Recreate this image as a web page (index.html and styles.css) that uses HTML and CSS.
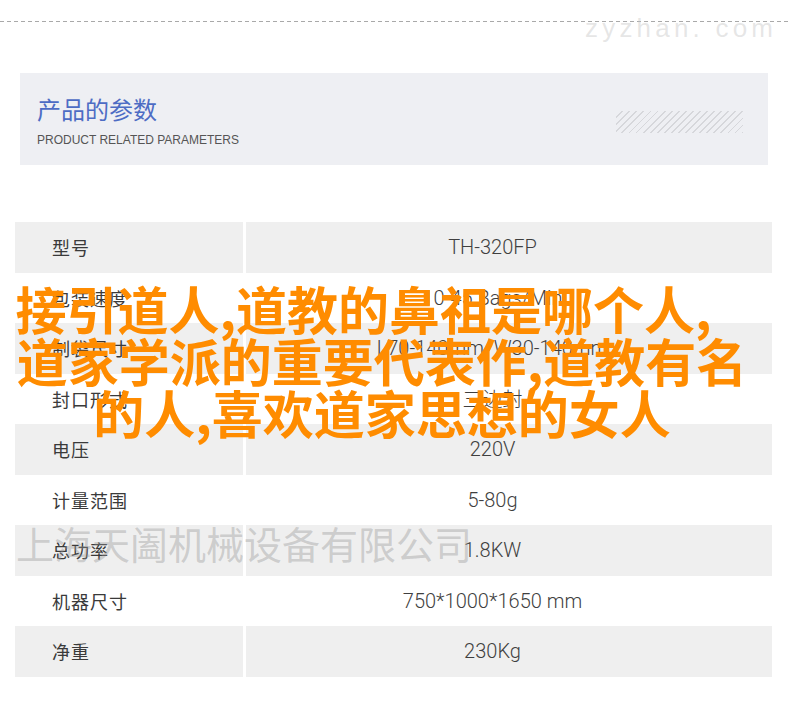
FILE: index.html
```html
<!DOCTYPE html>
<html lang="zh-CN">
<head>
<meta charset="utf-8">
<title>产品的参数</title>
<link rel="stylesheet" href="styles.css">
</head>
<body>
<div class="page">
  <div class="topline"></div>
  <div class="site">zyzhan. com</div>

  <section class="head">
    <div class="head-text">
      <h1 class="head-title">产品的参数</h1>
      <p class="head-sub">PRODUCT RELATED PARAMETERS</p>
    </div>
    <div class="hatch"></div>
  </section>

  <div class="spec">
    <div class="cell label alt">型号</div><div class="cell value alt">TH-320FP</div>
    <div class="cell label">包装速度</div><div class="cell value">10-45 Bags/Min</div>
    <div class="cell label alt">制袋尺寸</div><div class="cell value alt">L70-140mm  W30-140mm</div>
    <div class="cell label">封口形式</div><div class="cell value">三边封</div>
    <div class="cell label alt">电压</div><div class="cell value alt">220V</div>
    <div class="cell label">计量范围</div><div class="cell value">5-80g</div>
    <div class="cell label alt">总功率</div><div class="cell value alt">1.8KW</div>
    <div class="cell label">机器尺寸</div><div class="cell value">750*1000*1650 mm</div>
    <div class="cell label alt">净重</div><div class="cell value alt">230Kg</div>
  </div>

  <div class="company">上海天阖机械设备有限公司</div>

  <div class="headline">
    <span class="hl-line hl-first">接引道人,道教的鼻祖是哪个人,</span>
    <span class="hl-line">道家学派的重要代表作,道教有名</span>
    <span class="hl-line">的人,喜欢道家思想的女人</span>
  </div>
</div>
</body>
</html>
```

FILE: styles.css
```css
html, body {
  margin: 0;
  padding: 0;
  background: #ffffff;
}

.page {
  position: relative;
  width: 790px;
  height: 715px;
  overflow: hidden;
  font-family: "Noto Sans CJK SC", "Noto Sans", sans-serif;
}

.topline {
  margin-top: 21px;
  height: 1px;
  background: repeating-linear-gradient(to right, #a9a9a9 0 4px, transparent 4px 7px);
}

.site {
  position: absolute;
  left: 585px;
  top: 13px;
  font-family: "Liberation Sans", Arial, sans-serif;
  font-size: 26px;
  letter-spacing: 4.2px;
  color: rgba(200, 200, 200, 0.45);
  line-height: 30px;
  white-space: nowrap;
}

.head {
  margin: 51px 22px 0 20px;
  height: 92px;
  background: #eeeff3;
  display: flex;
  align-items: flex-start;
  justify-content: space-between;
}

.head-text {
  padding: 22px 0 0 17px;
}

.head-title {
  margin: 0;
  font-size: 24px;
  line-height: 28px;
  font-weight: 400;
  color: #4d6cc4;
}

.head-sub {
  margin: 10px 0 0 0;
  font-family: "Liberation Sans", Arial, sans-serif;
  font-size: 12px;
  line-height: 14px;
  color: #555555;
}

.hatch {
  width: 127px;
  height: 22px;
  margin: 38px 25px 0 0;
  background: repeating-linear-gradient(-45deg, #d6d7db 0 1.3px, transparent 1.3px 5px);
}

.spec {
  margin: 57px 0 0 15px;
  width: 757px;
  display: grid;
  grid-template-columns: 228px 526px;
  column-gap: 3px;
  grid-auto-rows: 50.5px;
}

.cell {
  display: flex;
  align-items: center;
}

.cell.alt {
  background: #efefef;
}

.label {
  padding-left: 37px;
  font-size: 18px;
  letter-spacing: 1px;
  color: #3a3a3a;
}

.value {
  justify-content: center;
  padding-right: 33px;
  font-family: Roboto, "Noto Sans CJK SC", sans-serif;
  font-size: 20px;
  font-weight: 300;
  color: #3f3f3f;
  white-space: pre;
}

.company {
  position: absolute;
  left: 16px;
  top: 523px;
  font-size: 38px;
  line-height: 40px;
  color: rgba(150, 150, 150, 0.4);
  white-space: nowrap;
}

.headline {
  position: absolute;
  left: 0;
  top: 282px;
  width: 764px;
  text-align: center;
  font-size: 51px;
  line-height: 52px;
  font-weight: 700;
  color: #ff8c00;
}

.hl-line {
  display: block;
  white-space: nowrap;
}

.hl-first {
  padding-right: 37px;
}
```
